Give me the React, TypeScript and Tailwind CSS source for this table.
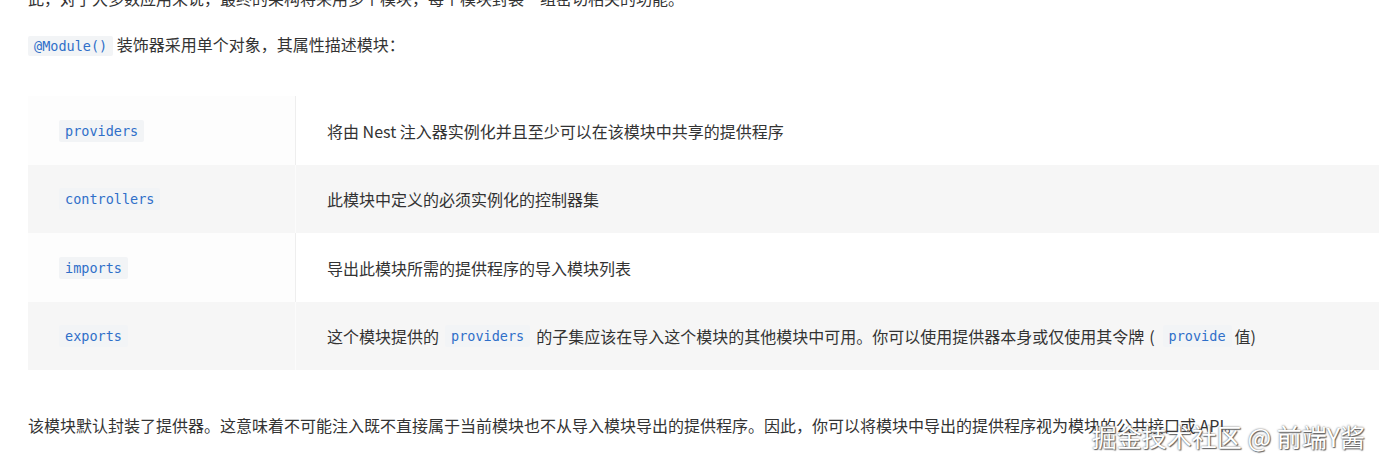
import React from "react";

const Code = ({ children, className = "" }: { children: React.ReactNode; className?: string }) => (
  <code
    className={`rounded-[2px] bg-[#f2f4f6] px-[6px] py-[2px] text-[13.5px] leading-[18px] text-[#2f6fc9] ${className}`}
    style={{ fontFamily: '"DejaVu Sans Mono", monospace' }}
  >
    {children}
  </code>
);

const rows: { key: string; desc: React.ReactNode; gray: boolean; h: string }[] = [
  { key: "providers", desc: "将由 Nest 注入器实例化并且至少可以在该模块中共享的提供程序", gray: false, h: "h-[69px]" },
  { key: "controllers", desc: "此模块中定义的必须实例化的控制器集", gray: true, h: "h-[68px]" },
  { key: "imports", desc: "导出此模块所需的提供程序的导入模块列表", gray: false, h: "h-[69px]" },
  {
    key: "exports",
    desc: (
      <>
        这个模块提供的 <Code className="mx-[6px]">providers</Code> 的子集应该在导入这个模块的其他模块中可用。你可以使用提供器本身或仅使用其令牌<span className="mx-[5px]">(</span> <Code className="mx-[3px]">provide</Code> 值)
      </>
    ),
    gray: true,
    h: "h-[68px]",
  },
];

export default function App() {
  return (
    <div
      className="relative h-[468px] w-[1379px] overflow-hidden bg-white pl-[28px] text-[16px] text-[#333]"
      style={{ fontFamily: '"Noto Sans CJK SC", "Noto Sans", sans-serif' }}
    >
      <p className="-mt-[16px] whitespace-nowrap leading-[28px]">
        此，对于大多数应用来说，最终的架构将采用多个模块，每个模块封装一组密切相关的功能。
      </p>
      <p className="mt-[18px] whitespace-nowrap leading-[28px]">
        <Code className="px-[5px]">@Module()</Code> 装饰器采用单个对象，其属性描述模块：
      </p>
      <div className="mt-[38px] w-[1380px]">
        {rows.map((r) => (
          <div key={r.key} className={`flex ${r.h} ${r.gray ? "bg-[#f6f6f6]" : "bg-white"}`}>
            <div
              className={`flex w-[268px] shrink-0 items-center border-r pl-[31px] ${
                r.gray ? "border-r-[#fbfbfb]" : "border-r-[#eeeeee] bg-[#fdfdfd]"
              }`}
            >
              <Code className={r.gray ? "bg-[#f0f2f4]" : ""}>{r.key}</Code>
            </div>
            <div className="flex items-center whitespace-nowrap pl-[31px]">{r.desc}</div>
          </div>
        ))}
      </div>
      <p className="mt-[41px] whitespace-nowrap leading-[28px]">
        该模块默认封装了提供器。这意味着不可能注入既不直接属于当前模块也不从导入模块导出的提供程序。因此，你可以将模块中导出的提供程序视为模块的公共接口或 API。
      </p>
      <div
        className="absolute right-[14px] top-[419px] whitespace-nowrap text-[25px] leading-[34px] text-white"
        style={{ textShadow: "0 0 2px #555, 1px 1px 1px #666" }}
      >
        掘金技术社区 @ 前端Y酱
      </div>
    </div>
  );
}
